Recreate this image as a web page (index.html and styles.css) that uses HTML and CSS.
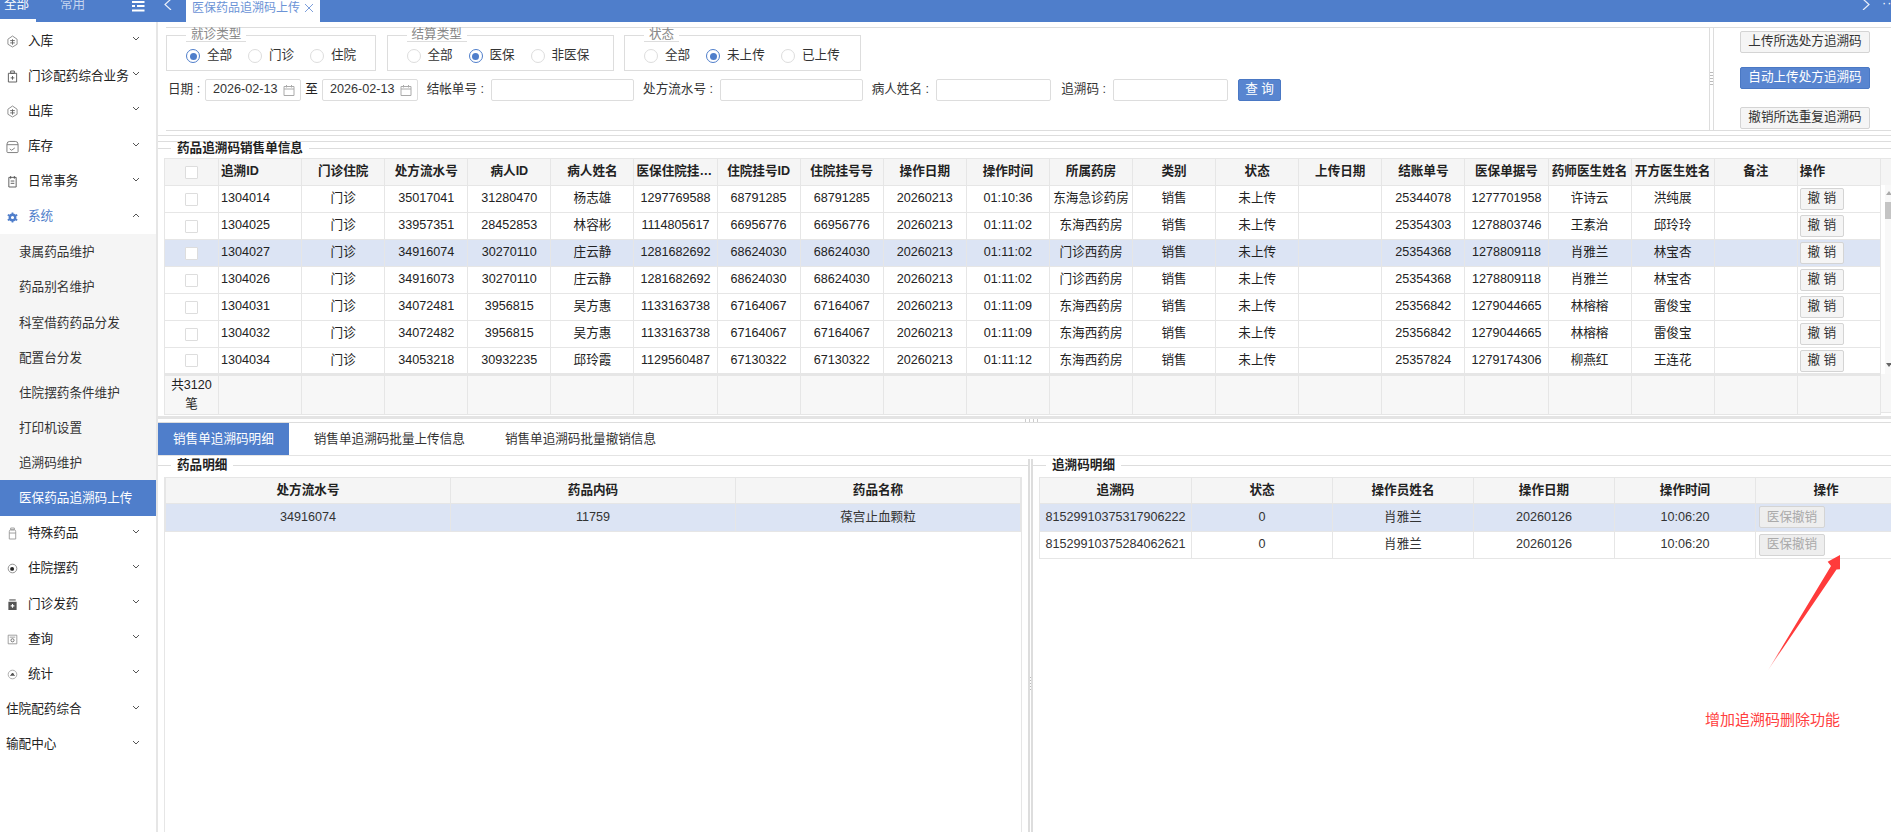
FILE: index.html
```html
<!DOCTYPE html>
<html lang="zh-CN">
<head>
<meta charset="utf-8">
<title>医保药品追溯码上传</title>
<link rel="stylesheet" href="styles.css">
</head>
<body>
<div class="app">
  <header class="topbar">
    <div class="side-tabs">
      <span class="side-tab on">全部</span>
      <span class="side-tab off">常用</span>
      <svg class="fold" viewBox="0 0 13 12"><path d="M0 2h12.500M5 6h7.500M0 6h3M0 10.500h12.500" stroke="#fff" stroke-width="2" fill="none"/></svg>
    </div>
    <svg class="nav-arrow left" viewBox="0 0 8 10"><path d="M7 -1L1 4.500L7 10" fill="none" stroke="#e8eefa" stroke-width="1.200"/></svg>
    <div class="page-tab">医保药品追溯码上传<svg class="page-x" viewBox="0 0 10 10"><path d="M1 1L9 9M9 1L1 9" stroke="#7d9fdb" fill="none"/></svg></div>
    <svg class="nav-arrow right" viewBox="0 0 8 10"><path d="M1 -1L7 4.500L1 10" fill="none" stroke="#e8eefa" stroke-width="1.200"/></svg>
    <span class="more">··</span>
  </header>
  <div class="layout">
    <nav class="sidebar">
      <div class="item"><svg class="ico" viewBox="0 0 12 14"><path d="M6 1L11 4.500V10L6 13L1 10V4.500Z" fill="none" stroke="#888"/><path d="M3.500 6h5M3.500 8.500h5M6 4.500v6" stroke="#666" fill="none"/></svg><span>入库</span><svg class="chev" viewBox="0 0 8 6"><path d="M1 1L4 4L7 1" fill="none" stroke="#555"/></svg></div>
      <div class="item"><svg class="ico" viewBox="0 0 12 14"><path d="M4 1h4v2.500H4zM1.500 3.500h9V13h-9z M6 6.500v4M4 8.500h4" fill="none" stroke="#555"/></svg><span>门诊配药综合业务</span><svg class="chev" viewBox="0 0 8 6"><path d="M1 1L4 4L7 1" fill="none" stroke="#555"/></svg></div>
      <div class="item"><svg class="ico" viewBox="0 0 12 14"><path d="M6 1L11 4.500V10L6 13L1 10V4.500Z" fill="none" stroke="#888"/><path d="M3.500 6h5M3.500 8.500h5M6 4.500v6" stroke="#666" fill="none"/></svg><span>出库</span><svg class="chev" viewBox="0 0 8 6"><path d="M1 1L4 4L7 1" fill="none" stroke="#555"/></svg></div>
      <div class="item"><svg class="ico big" viewBox="0 0 14 14"><path d="M1 4Q1 1 4 1h6q3 0 3 3v8q0 1-1 1H2q-1 0-1-1zM1 4.500h12M4 9l2 1.500 3.500-2.500" fill="none" stroke="#777"/></svg><span>库存</span><svg class="chev" viewBox="0 0 8 6"><path d="M1 1L4 4L7 1" fill="none" stroke="#555"/></svg></div>
      <div class="item"><svg class="ico" viewBox="0 0 12 14"><path d="M2 2.500h8V13H2zM4 1v3M8 1v3M4 6.500h4M4 9h4" fill="none" stroke="#555"/></svg><span>日常事务</span><svg class="chev" viewBox="0 0 8 6"><path d="M1 1L4 4L7 1" fill="none" stroke="#555"/></svg></div>
      <div class="item open"><svg class="ico" viewBox="0 0 14 14"><circle cx="7" cy="7" r="3.500" fill="none" stroke="#4f7ecb" stroke-width="3"/><path d="M7 0.500v2.500M7 11v2.500M1 3.500l2.200 1.300M10.800 9.200l2.200 1.300M1 10.500l2.200-1.300M10.800 4.800l2.200-1.300" stroke="#4f7ecb" stroke-width="2.200"/></svg><span>系统</span><svg class="chev" viewBox="0 0 8 6"><path d="M1 5L4 2L7 5" fill="none" stroke="#555"/></svg></div>
      <div class="subs">
        <div class="sub">隶属药品维护</div>
        <div class="sub">药品别名维护</div>
        <div class="sub">科室借药药品分发</div>
        <div class="sub">配置台分发</div>
        <div class="sub">住院摆药条件维护</div>
        <div class="sub">打印机设置</div>
        <div class="sub">追溯码维护</div>
        <div class="sub active">医保药品追溯码上传</div>
      </div>
      <div class="item"><svg class="ico" viewBox="0 0 12 14"><path d="M4 1h4v2H4zM2.500 5Q2.500 3 4 3h4q1.500 0 1.500 2v8h-7zM2.500 6.500h7" fill="none" stroke="#999"/></svg><span>特殊药品</span><svg class="chev" viewBox="0 0 8 6"><path d="M1 1L4 4L7 1" fill="none" stroke="#555"/></svg></div>
      <div class="item"><svg class="ico" viewBox="0 0 14 14"><circle cx="7" cy="7" r="5.500" fill="none" stroke="#777"/><circle cx="6.500" cy="7.500" r="2.500" fill="#222"/></svg><span>住院摆药</span><svg class="chev" viewBox="0 0 8 6"><path d="M1 1L4 4L7 1" fill="none" stroke="#555"/></svg></div>
      <div class="item"><svg class="ico" viewBox="0 0 12 14"><path d="M2.500 1h7v2h-7z" fill="#999"/><path d="M1.500 4h9v9h-9z" fill="#555"/><path d="M6 6.500v4M4 8.500h4" stroke="#fff" stroke-width="1.200"/></svg><span>门诊发药</span><svg class="chev" viewBox="0 0 8 6"><path d="M1 1L4 4L7 1" fill="none" stroke="#555"/></svg></div>
      <div class="item"><svg class="ico" viewBox="0 0 14 14"><path d="M1.500 1.500h11v11h-11zM3.500 4h7" fill="none" stroke="#888"/><circle cx="7" cy="8" r="2" fill="none" stroke="#555"/></svg><span>查询</span><svg class="chev" viewBox="0 0 8 6"><path d="M1 1L4 4L7 1" fill="none" stroke="#555"/></svg></div>
      <div class="item"><svg class="ico" viewBox="0 0 14 14"><circle cx="7" cy="7" r="5.500" fill="none" stroke="#999"/><path d="M4 8.500h6V7.500H9V6H8V5H6v1.500H5V7.500H4z" fill="#555"/></svg><span>统计</span><svg class="chev" viewBox="0 0 8 6"><path d="M1 1L4 4L7 1" fill="none" stroke="#555"/></svg></div>
      <div class="item plain"><span>住院配药综合</span><svg class="chev" viewBox="0 0 8 6"><path d="M1 1L4 4L7 1" fill="none" stroke="#555"/></svg></div>
      <div class="item plain"><span>输配中心</span><svg class="chev" viewBox="0 0 8 6"><path d="M1 1L4 4L7 1" fill="none" stroke="#555"/></svg></div>
    </nav>
    <main class="main">
      <section class="query">
        <div class="query-left">
          <div class="groups">
            <fieldset class="group g1"><legend>就诊类型</legend><div class="opts">
              <label class="opt"><i class="radio on"></i>全部</label><label class="opt"><i class="radio"></i>门诊</label><label class="opt"><i class="radio"></i>住院</label></div></fieldset>
            <fieldset class="group g2"><legend>结算类型</legend><div class="opts">
              <label class="opt"><i class="radio"></i>全部</label><label class="opt"><i class="radio on"></i>医保</label><label class="opt"><i class="radio"></i>非医保</label></div></fieldset>
            <fieldset class="group g3"><legend>状态</legend><div class="opts">
              <label class="opt"><i class="radio"></i>全部</label><label class="opt wide"><i class="radio on"></i>未上传</label><label class="opt"><i class="radio"></i>已上传</label></div></fieldset>
          </div>
          <div class="filters">
            <span class="lbl">日期 :</span>
            <div class="date"><span>2026-02-13</span><svg viewBox="0 0 12 12"><path d="M1 2.500h10v9H1zM1 5h10M3.500 1v2.500M8.500 1v2.500" fill="none" stroke="#aaa"/></svg></div>
            <span class="to">至</span>
            <div class="date"><span>2026-02-13</span><svg viewBox="0 0 12 12"><path d="M1 2.500h10v9H1zM1 5h10M3.500 1v2.500M8.500 1v2.500" fill="none" stroke="#aaa"/></svg></div>
            <span class="lbl">结帐单号 :</span><input class="txt">
            <span class="lbl">处方流水号 :</span><input class="txt">
            <span class="lbl">病人姓名 :</span><input class="txt">
            <span class="lbl">追溯码 :</span><input class="txt">
            <span></span>
            <button class="btn-primary">查 询</button>
          </div>
        </div>
        <div class="vsplit"><i class="grip-v"></i></div>
        <div class="query-right">
          <button class="btn">上传所选处方追溯码</button>
          <button class="btn blue">自动上传处方追溯码</button>
          <button class="btn last">撤销所选重复追溯码</button>
        </div>
      </section>
      <div class="rule r1"></div>
      <div class="rule r2"></div>
      <fieldset class="panel top-panel">
        <legend>药品追溯码销售单信息</legend>
        <div class="grid-wrap">
          <table class="grid main-grid">
            <colgroup><col class="c-check"></colgroup>
            <thead><tr><th><i class="check"></i></th><th class="l">追溯ID</th><th>门诊住院</th><th>处方流水号</th><th>病人ID</th><th>病人姓名</th><th>医保住院挂号号</th><th>住院挂号ID</th><th>住院挂号号</th><th>操作日期</th><th>操作时间</th><th>所属药房</th><th>类别</th><th>状态</th><th>上传日期</th><th>结账单号</th><th>医保单据号</th><th>药师医生姓名</th><th>开方医生姓名</th><th>备注</th><th class="l">操作</th></tr></thead>
            <tbody>
              <tr><td><i class="check"></i></td><td class="l">1304014</td><td>门诊</td><td>35017041</td><td>31280470</td><td>杨志雄</td><td>1297769588</td><td>68791285</td><td>68791285</td><td>20260213</td><td>01:10:36</td><td>东海急诊药房</td><td>销售</td><td>未上传</td><td></td><td>25344078</td><td>1277701958</td><td>许诗云</td><td>洪纯展</td><td></td><td class="l"><button class="undo">撤 销</button></td></tr>
              <tr><td><i class="check"></i></td><td class="l">1304025</td><td>门诊</td><td>33957351</td><td>28452853</td><td>林容彬</td><td>1114805617</td><td>66956776</td><td>66956776</td><td>20260213</td><td>01:11:02</td><td>东海西药房</td><td>销售</td><td>未上传</td><td></td><td>25354303</td><td>1278803746</td><td>王素治</td><td>邱玲玲</td><td></td><td class="l"><button class="undo">撤 销</button></td></tr>
              <tr class="sel"><td><i class="check"></i></td><td class="l">1304027</td><td>门诊</td><td>34916074</td><td>30270110</td><td>庄云静</td><td>1281682692</td><td>68624030</td><td>68624030</td><td>20260213</td><td>01:11:02</td><td>门诊西药房</td><td>销售</td><td>未上传</td><td></td><td>25354368</td><td>1278809118</td><td>肖雅兰</td><td>林宝杏</td><td></td><td class="l"><button class="undo">撤 销</button></td></tr>
              <tr><td><i class="check"></i></td><td class="l">1304026</td><td>门诊</td><td>34916073</td><td>30270110</td><td>庄云静</td><td>1281682692</td><td>68624030</td><td>68624030</td><td>20260213</td><td>01:11:02</td><td>门诊西药房</td><td>销售</td><td>未上传</td><td></td><td>25354368</td><td>1278809118</td><td>肖雅兰</td><td>林宝杏</td><td></td><td class="l"><button class="undo">撤 销</button></td></tr>
              <tr><td><i class="check"></i></td><td class="l">1304031</td><td>门诊</td><td>34072481</td><td>3956815</td><td>吴方惠</td><td>1133163738</td><td>67164067</td><td>67164067</td><td>20260213</td><td>01:11:09</td><td>东海西药房</td><td>销售</td><td>未上传</td><td></td><td>25356842</td><td>1279044665</td><td>林榕榕</td><td>雷俊宝</td><td></td><td class="l"><button class="undo">撤 销</button></td></tr>
              <tr><td><i class="check"></i></td><td class="l">1304032</td><td>门诊</td><td>34072482</td><td>3956815</td><td>吴方惠</td><td>1133163738</td><td>67164067</td><td>67164067</td><td>20260213</td><td>01:11:09</td><td>东海西药房</td><td>销售</td><td>未上传</td><td></td><td>25356842</td><td>1279044665</td><td>林榕榕</td><td>雷俊宝</td><td></td><td class="l"><button class="undo">撤 销</button></td></tr>
              <tr><td><i class="check"></i></td><td class="l">1304034</td><td>门诊</td><td>34053218</td><td>30932235</td><td>邱玲霞</td><td>1129560487</td><td>67130322</td><td>67130322</td><td>20260213</td><td>01:11:12</td><td>东海西药房</td><td>销售</td><td>未上传</td><td></td><td>25357824</td><td>1279174306</td><td>柳燕红</td><td>王连花</td><td></td><td class="l"><button class="undo">撤 销</button></td></tr>
            </tbody>
            <tfoot><tr><td class="total">共3120 笔</td><td></td><td></td><td></td><td></td><td></td><td></td><td></td><td></td><td></td><td></td><td></td><td></td><td></td><td></td><td></td><td></td><td></td><td></td><td></td><td></td></tr></tfoot>
          </table>
          <div class="vscroll">
            <div class="vs-head"></div>
            <div class="vs-track"><i class="vs-up"></i><i class="vs-thumb"></i><i class="vs-down"></i></div>
            <div class="vs-foot"></div>
          </div>
        </div>
      </fieldset>
      <div class="hsplit"><i class="grip-h"></i></div>
      <div class="tabs">
        <span class="tab active">销售单追溯码明细</span>
        <span class="tab">销售单追溯码批量上传信息</span>
        <span class="tab">销售单追溯码批量撤销信息</span>
      </div>
      <div class="lower">
        <fieldset class="panel low-left">
          <legend>药品明细</legend>
          <div class="box">
            <table class="grid sub-grid">
              <thead><tr><th>处方流水号</th><th>药品内码</th><th>药品名称</th></tr></thead>
              <tbody><tr class="sel"><td>34916074</td><td>11759</td><td>葆宫止血颗粒</td></tr></tbody>
            </table>
          </div>
        </fieldset>
        <div class="low-split"><i class="grip-low"></i></div>
        <fieldset class="panel low-right">
          <legend>追溯码明细</legend>
          <div class="box-clip">
            <table class="grid code-grid">
              <colgroup><col class="c-code"></colgroup>
              <thead><tr><th>追溯码</th><th>状态</th><th>操作员姓名</th><th>操作日期</th><th>操作时间</th><th>操作</th></tr></thead>
              <tbody>
                <tr class="sel"><td>81529910375317906222</td><td>0</td><td>肖雅兰</td><td>20260126</td><td>10:06:20</td><td class="l"><button class="undo dis">医保撤销</button></td></tr>
                <tr><td>81529910375284062621</td><td>0</td><td>肖雅兰</td><td>20260126</td><td>10:06:20</td><td class="l"><button class="undo dis">医保撤销</button></td></tr>
              </tbody>
            </table>
          </div>
        </fieldset>
      </div>
    </main>
  </div>
  <svg class="mark-arrow" viewBox="0 0 85 125">
    <defs><linearGradient id="fade" x1="0" y1="1" x2="1" y2="0"><stop offset="0" stop-color="#ff3b3b" stop-opacity=".2"/><stop offset=".2" stop-color="#ff3b3b"/></linearGradient></defs>
    <polygon points="80,5 80,19.300 76.500,19.500 7.700,120.700 71,16 67.700,11.700" fill="url(#fade)"/>
  </svg>
  <div class="mark-text">增加追溯码删除功能</div>
</div>
</body>
</html>
```

FILE: styles.css
```css
* { box-sizing: border-box; }
html, body { margin: 0; height: 100%; overflow: hidden; background: #fff; }
body { font: 12.6px/1.2 "Liberation Sans", "Noto Sans CJK SC", sans-serif; color: #222; }
.app { position: relative; width: 1891px; height: 832px; overflow: hidden; display: flex; flex-direction: column; }

/* top bar */
.topbar { flex: none; height: 22px; background: #4f7ecb; display: flex; color: #fff; }
.side-tabs { width: 164px; display: flex; flex: none; }
.side-tab { height: 22px; line-height: 9px; padding-left: 4px; }
.side-tab.on { width: 36px; margin-right: 20px; border-bottom: 3px solid #fff; }
.side-tab.off { width: 76px; color: #c5d5ef; }
.fold { width: 13px; height: 12px; flex: none; }
.nav-arrow { width: 8px; height: 10px; flex: none; }
.page-tab { margin-left: 14px; width: 134px; background: #fff; color: #6b93d6; padding: 1px 0 0 6px; flex: none; font-size: 12px; line-height: 14px; white-space: nowrap; display: flex; }
.page-x { width: 10px; height: 10px; margin: 2px 0 0 4px; flex: none; }
.nav-arrow.right { margin-left: 1542px; }
.more { margin-left: 12px; line-height: 6px; letter-spacing: 1px; }

/* layout */
.layout { flex: 1; display: flex; min-height: 0; }
.sidebar { flex: none; width: 158px; padding-top: 1px; border-right: 2px solid #e6e6e6; background: #fff; }
.item { height: 35.2px; display: flex; align-items: center; padding: 1px 0 0 7px; position: relative; color: #222; }
.item.plain { padding-left: 0; }
.item.plain span { margin-left: 6px; }
.item span { margin-left: 10px; white-space: nowrap; }
.ico { width: 11px; height: 13px; flex: none; }
.ico.big { width: 13px; height: 14px; margin: 0 -1px; }
.chev { position: absolute; left: 132px; top: 13px; width: 8px; height: 6px; }
.item.open, .item.open span { color: #4f7ecb; }
.subs { background: #f5f5f5; }
.sub { height: 35.2px; line-height: 36px; padding-left: 19px; color: #333; }
.sub.active { background: #4f7ecb; color: #fff; }

/* main */
.main { flex: 1; min-width: 0; display: flex; flex-direction: column; }
.query { flex: none; height: 104px; margin: 5px 0 0 8px; border-top: 1px solid #ddd; border-bottom: 1px solid #ddd; display: flex; }
.query-left { flex: 1; min-width: 0; }
.groups { display: flex; gap: 10.500px; }
fieldset { margin: 0; min-width: 0; }
.group { height: 43px; padding: 7px 0 0 19px; border: 1px solid #ddd; border-radius: 0; }
.g1 { width: 210px; }
.g2 { width: 227px; }
.g3 { width: 237px; }
.group legend { margin-left: 0; padding: 0 5px; color: #888; line-height: 13px; border-bottom: 1px solid #ddd; }
.opts { display: flex; }
.opt { width: 62px; display: flex; align-items: center; gap: 7px; height: 14px; white-space: nowrap; color: #333; }
.opt.wide { width: 75px; }
.radio { width: 14px; height: 14px; border-radius: 50%; border: 1px solid #ddd; display: block; flex: none; background: #fff; }
.radio.on { border-color: #4f7ecb; position: relative; }
.radio.on::after { content: ""; position: absolute; left: 2.500px; top: 2.500px; width: 7px; height: 7px; border-radius: 50%; background: #4f7ecb; }
.filters { margin: 8px 0 0 2px; display: grid; grid-template-columns: 37px 96px 21px 96px 73px 143px 86px 143px 73px 115px 62px 115px 10px 43px; height: 22px; align-items: stretch; }
.lbl { text-align: right; padding-right: 7px; line-height: 20px; white-space: nowrap; color: #333; }
.to { text-align: center; line-height: 21px; }
.date { border: 1px solid #ddd; border-radius: 2px; display: flex; align-items: center; padding-left: 7px; gap: 6px; color: #333; }
.date svg { width: 12px; height: 12px; }
.txt { border: 1px solid #ddd; border-radius: 2px; padding: 0; margin: 0; background: #fff; min-width: 0; width: 100%; }
.btn-primary { background: #5885d0; border: 1px solid #4a78c4; border-radius: 2px; color: #fff; font: inherit; padding: 0; }
.vsplit { flex: none; width: 5px; border-left: 1px solid #ddd; border-right: 1px solid #ddd; display: flex; align-items: center; justify-content: center; }
.grip-v { width: 3px; height: 14px; background: repeating-linear-gradient(#bbb 0 1px, transparent 1px 3px); }
.query-right { flex: none; width: 177px; padding: 3px 0 0 26px; display: flex; flex-direction: column; gap: 14px; }
.btn { width: 130px; height: 22px; background: #f5f5f5; border: 1px solid #d4d4d4; border-radius: 2px; color: #333; font: inherit; padding: 0; white-space: nowrap; }
.btn.blue { background: #5885d0; border-color: #4a78c4; color: #fff; }
.btn.last { margin-top: 4px; }
.rule { flex: none; border-bottom: 1px solid #ddd; }
.r1 { height: 5px; }
.r2 { height: 6px; }

/* panels and grids */
.panel { border: 0; border-top: 1px solid #ddd; padding: 4px 0 0 6px; }
.panel legend { margin-left: 7px; padding: 0 6px; line-height: 12px; color: #222; font-weight: 700; }
.top-panel { flex: none; height: 274px; }
.grid-wrap { display: flex; }
.grid { border-collapse: collapse; table-layout: fixed; background: #fff; }
.grid th, .grid td { border: 1px solid #e6e6e6; height: 27px; padding: 0 2px; text-align: center; white-space: nowrap; overflow: hidden; text-overflow: ellipsis; font-weight: 400; }
.grid th { background: #f5f5f5; font-weight: 700; color: #222; }
.grid .l { text-align: left; }
.grid tr.sel td { background: #dce4f4; }
.main-grid { width: 1717px; flex: none; }
.c-check { width: 54px; }
.check { display: inline-block; width: 13px; height: 13px; border: 1px solid #ddd; background: #fff; border-radius: 1px; vertical-align: middle; }
.main-grid tfoot td { height: 39px; background: #f7f7f7; border-top: 3px solid #e6e6e6; white-space: normal; line-height: 19px; }
.main-grid tfoot .total { padding: 0 6px; }
.undo { width: 44px; height: 22px; padding: 0; background: #f5f5f5; border: 1px solid #d4d4d4; border-radius: 2px; color: #333; font: inherit; }
.undo.dis { width: 66px; background: #eee; color: #aaa; margin-left: 1px; }
.vscroll { flex: 1; display: flex; flex-direction: column; }
.vs-head { height: 27px; background: #f5f5f5; border-top: 1px solid #e6e6e6; }
.vs-track { height: 189px; margin-left: 4px; background: #f8f8f8; position: relative; }
.vs-up, .vs-down { position: absolute; left: 1px; width: 0; height: 0; border-left: 3px solid transparent; border-right: 3px solid transparent; }
.vs-up { top: 6px; border-bottom: 4px solid #aaa; }
.vs-down { top: 178px; border-top: 4px solid #666; }
.vs-thumb { position: absolute; left: 0; top: 17px; width: 6px; height: 17px; background: #c4c4c4; }
.vs-foot { height: 39px; background: #f7f7f7; border-bottom: 1px solid #e6e6e6; }
.hsplit { flex: none; height: 7px; border-top: 3px solid #e4e4e4; border-bottom: 1px solid #ddd; display: flex; justify-content: center; padding-left: 15px; }
.grip-h { width: 14px; height: 3px; background: repeating-linear-gradient(90deg, #ccc 0 1px, transparent 1px 4px); }
.tabs { flex: none; height: 33px; border-bottom: 1px solid #e4e4e4; display: flex; gap: 10px; }
.tab { padding: 0 15px; line-height: 32px; white-space: nowrap; color: #333; }
.tab.active { background: #4f7ecb; color: #fff; }
.lower { flex: 1; min-height: 0; margin-top: 3px; display: flex; }
.lower .panel { padding-top: 6px; }
.low-left { flex: none; width: 870px; padding-right: 6px; }
.low-right { flex: 1; min-width: 0; padding-left: 6px; }
.low-split { flex: none; width: 5px; border-left: 2px solid #ddd; border-right: 2px solid #ddd; padding-top: 218px; }
.grip-low { display: block; width: 1px; height: 14px; background: repeating-linear-gradient(#bbb 0 1px, transparent 1px 3px); }
.box { height: 360px; border-left: 1px solid #e6e6e6; border-right: 1px solid #e6e6e6; }
.sub-grid { width: 100%; color: #333; }
.sub-grid td, .code-grid td { color: #333; }
.box-clip { overflow: hidden; }
.code-grid { width: 858px; }
.c-code { width: 152px; }
.sub-grid th, .code-grid th { height: 26px; }
.sub-grid td, .code-grid td { height: 27.500px; }

/* annotation */
.mark-arrow { position: absolute; left: 1760px; top: 550px; width: 85px; height: 125px; }
.mark-text { position: absolute; left: 1705px; top: 711px; font-size: 15px; line-height: 18px; color: #ff4040; white-space: nowrap; }
```
